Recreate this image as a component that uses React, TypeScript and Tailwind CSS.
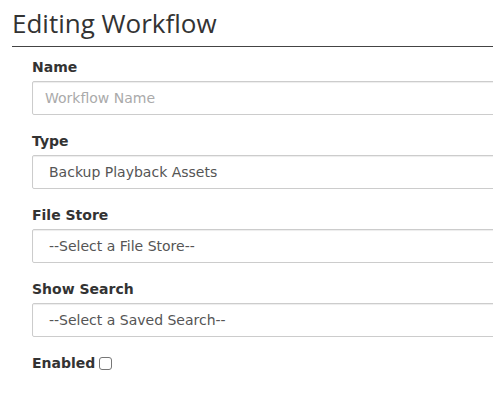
import React from "react";

const labelCls =
  "block text-[14px] leading-5 font-bold text-[#333] mb-1 font-['DejaVu_Sans',sans-serif]";
const inputCls =
  "block w-[540px] h-[34px] border border-[#ccc] rounded-[2px] bg-white px-3 text-[14px] text-[#555] font-['DejaVu_Sans',sans-serif] shadow-[inset_0_1px_1px_rgba(0,0,0,0.075)] mb-4";

function Field({ label, children }: { label: string; children: React.ReactNode }) {
  return (
    <div>
      <label className={labelCls}>{label}</label>
      {children}
    </div>
  );
}

export default function App() {
  return (
    <div className="w-[493px] h-[399px] overflow-hidden bg-white pl-3">
      <h2 className="text-[26px] leading-[34px] pt-[6px] pb-[6px] text-[#333] font-['Open_Sans',sans-serif] border-b border-[#444]">
        Editing Workflow
      </h2>
      <form className="pl-5 pt-[10px]">
        <Field label="Name">
          <input
            className={inputCls + " placeholder:text-[#aaa]"}
            placeholder="Workflow Name"
          />
        </Field>
        <Field label="Type">
          <div
            className={
              inputCls +
              " flex items-center pl-4 border-[#80b4d9] shadow-[inset_0_1px_1px_rgba(0,0,0,0.075),0_0_8px_rgba(102,175,233,0.45)]"
            }
          >
            Backup Playback Assets
          </div>
        </Field>
        <Field label="File Store">
          <div className={inputCls + " flex items-center pl-4"}>--Select a File Store--</div>
        </Field>
        <Field label="Show Search">
          <div className={inputCls + " flex items-center pl-4"}>--Select a Saved Search--</div>
        </Field>
        <label className={labelCls + " flex items-center gap-[4px]"}>
          Enabled
          <span className="inline-block w-[13px] h-[13px] border border-[#767676] rounded-[3px] bg-white" />
        </label>
      </form>
    </div>
  );
}
